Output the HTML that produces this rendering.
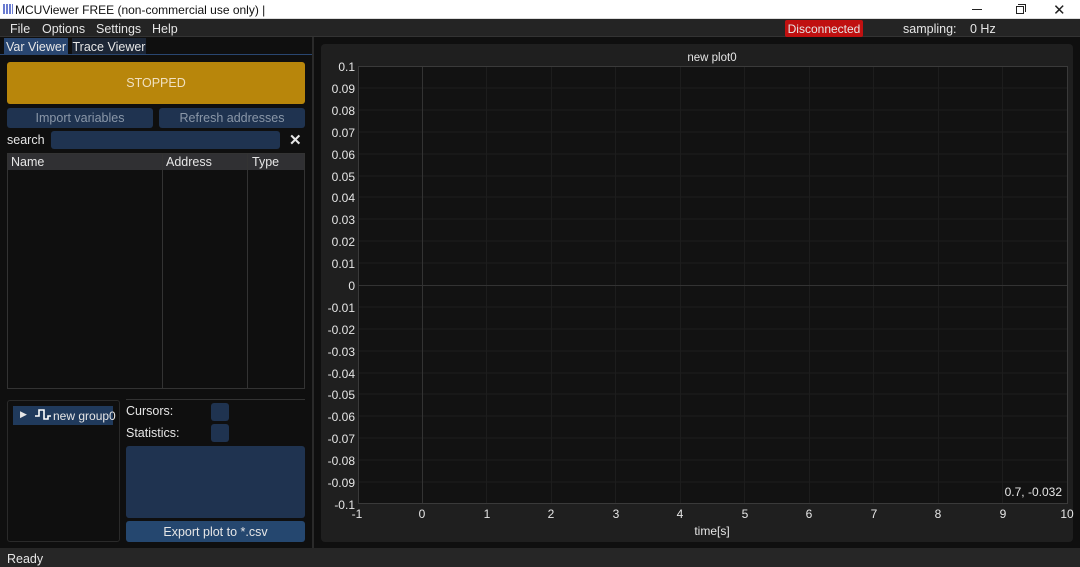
<!DOCTYPE html><html><head><style>
*{margin:0;padding:0;box-sizing:border-box}
body{width:1080px;height:567px;background:#0f0f0f;font-family:"Liberation Sans",sans-serif;font-size:12px;color:#e6e6e6;position:relative;overflow:hidden}
.a{position:absolute}
.c{display:flex;align-items:center;justify-content:center}
</style></head><body>
<div class="a" style="left:0;top:0;width:1080px;height:19px;background:#fff;border-bottom:1px solid #ddd"></div>
<div class="a" style="left:3px;top:4px;width:10px;height:10px;background:repeating-linear-gradient(90deg,#6a7bd0 0 2px,#fff 2px 3px)"></div>
<div class="a" style="left:15px;top:3px;color:#111;font-size:12px">MCUViewer FREE (non-commercial use only) |</div>
<div class="a" style="left:972px;top:9px;width:10px;height:1px;background:#222"></div>
<div class="a" style="left:1016px;top:6px;width:8px;height:8px;border:1px solid #222"></div>
<div class="a" style="left:1018px;top:4px;width:8px;height:8px;border-top:1px solid #222;border-right:1px solid #222"></div>
<div class="a" style="left:1053px;top:1px;color:#222;font-size:15px">✕</div>
<div class="a" style="left:0;top:19px;width:1080px;height:18px;background:#242424;border-bottom:1px solid #333"></div>
<div class="a" style="left:10px;top:22px;font-size:12.5px">File</div>
<div class="a" style="left:42px;top:22px;font-size:12.5px">Options</div>
<div class="a" style="left:96px;top:22px;font-size:12.5px">Settings</div>
<div class="a" style="left:152px;top:22px;font-size:12.5px">Help</div>
<div class="a c" style="left:785px;top:20px;width:78px;height:17px;background:#c01010;border-radius:2px;font-size:12px">Disconnected</div>
<div class="a" style="left:903px;top:22px;font-size:12.5px">sampling:</div>
<div class="a" style="left:970px;top:22px;font-size:12.5px">0 Hz</div>
<div class="a c" style="left:4px;top:38px;width:64px;height:17px;background:#294670;font-size:12.5px">Var Viewer</div>
<div class="a c" style="left:72px;top:38px;width:74px;height:17px;background:#1c2636;font-size:12.5px">Trace Viewer</div>
<div class="a" style="left:0;top:54px;width:312px;height:1px;background:#294670"></div>
<div class="a c" style="left:7px;top:62px;width:298px;height:42px;background:#b8860b;border-radius:3px;font-size:12.5px;color:#f0e0c0">STOPPED</div>
<div class="a c" style="left:7px;top:108px;width:146px;height:20px;background:#1f3350;border-radius:3px;color:#8a97a8;font-size:12.5px">Import variables</div>
<div class="a c" style="left:159px;top:108px;width:146px;height:20px;background:#1f3350;border-radius:3px;color:#8a97a8;font-size:12.5px">Refresh addresses</div>
<div class="a" style="left:7px;top:133px;font-size:12.5px">search</div>
<div class="a" style="left:51px;top:131px;width:229px;height:18px;background:#1f3350;border-radius:3px"></div>
<div class="a" style="left:289px;top:131px;font-size:15px;font-weight:bold">✕</div>
<div class="a" style="left:7px;top:153px;width:298px;height:236px;border:1px solid #333;background:#0f0f0f"></div>
<div class="a" style="left:8px;top:154px;width:296px;height:16px;background:#303033"></div>
<div class="a" style="left:11px;top:155px;font-size:12.5px">Name</div>
<div class="a" style="left:166px;top:155px;font-size:12.5px">Address</div>
<div class="a" style="left:252px;top:155px;font-size:12.5px">Type</div>
<div class="a" style="left:162px;top:154px;width:1px;height:234px;background:#333"></div>
<div class="a" style="left:247px;top:154px;width:1px;height:234px;background:#333"></div>
<div class="a" style="left:126px;top:399px;width:179px;height:1px;background:#333"></div>
<div class="a" style="left:7px;top:400px;width:113px;height:142px;border:1px solid #2a2a2a;border-radius:3px"></div>
<div class="a" style="left:13px;top:406px;width:100px;height:19px;background:#203a5c"></div>
<div class="a" style="left:20px;top:409px;font-size:9px">▶</div>
<svg class="a" style="left:34px;top:408px" width="18" height="14"><path d="M1 8H5V2H10V11H14V8H17" stroke="#fff" stroke-width="1.6" fill="none"/></svg>
<div class="a" style="left:53px;top:409px;font-size:12px">new group0</div>
<div class="a" style="left:126px;top:404px;font-size:12.5px">Cursors:</div>
<div class="a" style="left:211px;top:403px;width:18px;height:18px;background:#1f3350;border-radius:3px"></div>
<div class="a" style="left:126px;top:426px;font-size:12.5px">Statistics:</div>
<div class="a" style="left:211px;top:424px;width:18px;height:18px;background:#1f3350;border-radius:3px"></div>
<div class="a" style="left:126px;top:446px;width:179px;height:72px;background:#1f3350;border-radius:3px"></div>
<div class="a c" style="left:126px;top:521px;width:179px;height:21px;background:#25476f;border-radius:3px;font-size:12.5px">Export plot to *.csv</div>
<div class="a" style="left:312px;top:37px;width:2px;height:511px;background:#2a2a2a"></div>
<div class="a" style="left:0;top:548px;width:1080px;height:19px;background:#262626"></div>
<div class="a" style="left:7px;top:552px;font-size:12.5px">Ready</div>
<div class="a" style="left:321px;top:44px;width:752px;height:498px;background:#1f1f1f;border-radius:4px"></div>
<svg class="a" style="left:0;top:0" width="1080" height="567" font-family="Liberation Sans" font-size="12" fill="#e6e6e6">
<text x="712" y="61" text-anchor="middle" font-size="11.5">new plot0</text>
<rect x="358.5" y="66.5" width="709" height="437" fill="#121212" stroke="#3a3a3a"/>
<g stroke="#1d1d1d" stroke-width="1">
<path d="M486.5 67V503M551.5 67V503M615.5 67V503M680.5 67V503M744.5 67V503M809.5 67V503M873.5 67V503M938.5 67V503M1002.5 67V503"/>
<path d="M359 88H1067M359 110H1067M359 132H1067M359 154H1067M359 176H1067M359 197H1067M359 219H1067M359 241H1067M359 263H1067M359 307H1067M359 329H1067M359 351H1067M359 373H1067M359 394H1067M359 416H1067M359 438H1067M359 460H1067M359 482H1067"/>
</g>
<path d="M422.5 67V503M359 285.5H1067" stroke="#333"/>
<g text-anchor="end">
<text x="355" y="71">0.1</text><text x="355" y="93">0.09</text><text x="355" y="115">0.08</text><text x="355" y="137">0.07</text><text x="355" y="159">0.06</text><text x="355" y="181">0.05</text><text x="355" y="202">0.04</text><text x="355" y="224">0.03</text><text x="355" y="246">0.02</text><text x="355" y="268">0.01</text><text x="355" y="290">0</text><text x="355" y="312">-0.01</text><text x="355" y="334">-0.02</text><text x="355" y="356">-0.03</text><text x="355" y="378">-0.04</text><text x="355" y="399">-0.05</text><text x="355" y="421">-0.06</text><text x="355" y="443">-0.07</text><text x="355" y="465">-0.08</text><text x="355" y="487">-0.09</text><text x="355" y="509">-0.1</text>
</g>
<g text-anchor="middle">
<text x="357" y="518">-1</text><text x="422" y="518">0</text><text x="487" y="518">1</text><text x="551" y="518">2</text><text x="616" y="518">3</text><text x="680" y="518">4</text><text x="745" y="518">5</text><text x="809" y="518">6</text><text x="874" y="518">7</text><text x="938" y="518">8</text><text x="1003" y="518">9</text><text x="1067" y="518">10</text>
<text x="712" y="535">time[s]</text>
</g>
<text x="1062" y="496" text-anchor="end">0.7, -0.032</text>
</svg>
</body></html>
